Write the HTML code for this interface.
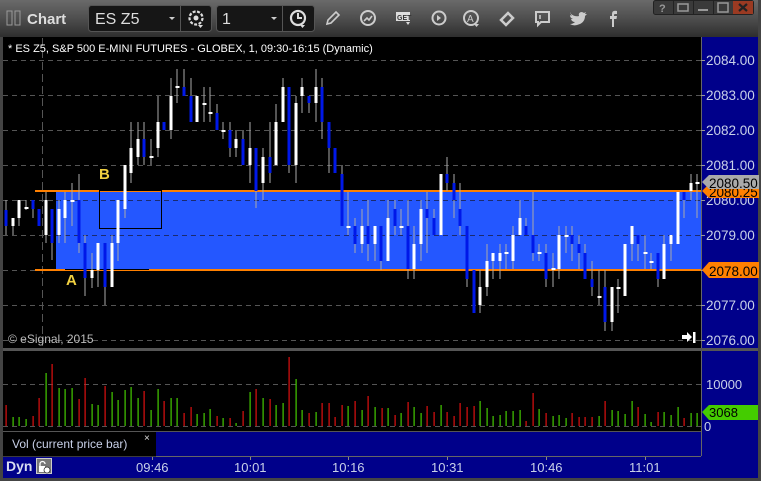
<!DOCTYPE html>
<html><head><meta charset="utf-8"><style>
body{margin:0;width:761px;height:481px;overflow:hidden;background:#3a3a3a;font-family:"Liberation Sans",sans-serif}
svg{display:block}
</style></head><body>
<svg id="s" width="761" height="481" xmlns="http://www.w3.org/2000/svg" font-family="Liberation Sans, sans-serif">
<defs><linearGradient id="tb" x1="0" y1="0" x2="0" y2="1"><stop offset="0" stop-color="#6a6a6a"/><stop offset="0.5" stop-color="#4e4e4e"/><stop offset="1" stop-color="#2e2e2e"/></linearGradient></defs>
<rect x="0" y="0" width="761" height="481" fill="#3c3c3c"/>
<rect x="0" y="0" width="761" height="37" fill="url(#tb)"/>
<rect x="7" y="11" width="5" height="14" fill="none" stroke="#999" stroke-width="1"/>
<rect x="15" y="11" width="5" height="14" fill="none" stroke="#999" stroke-width="1"/>
<text x="27" y="24" fill="#ddd" font-size="15" font-weight="bold">Chart</text>
<rect x="88.5" y="5.5" width="123" height="26" rx="3" fill="#161616" stroke="#555"/>
<line x1="180.5" y1="6" x2="180.5" y2="31" stroke="#555"/>
<text x="95" y="24" fill="#ddd" font-size="16">ES Z5</text>
<path d="M169 17 l6 0 l-3 3z" fill="#ccc"/>
<circle cx="196" cy="18" r="6.5" fill="none" stroke="#ddd" stroke-width="2.2" stroke-dasharray="3 1.5"/><circle cx="196" cy="18" r="2.5" fill="#ddd"/><path d="M198 25 l5 0 l-2.5 3z" fill="#ddd"/>
<rect x="216.5" y="5.5" width="98" height="26" rx="3" fill="#161616" stroke="#555"/>
<line x1="282.5" y1="6" x2="282.5" y2="31" stroke="#555"/>
<text x="222" y="24" fill="#ddd" font-size="16">1</text>
<path d="M271 17 l6 0 l-3 3z" fill="#ccc"/>
<circle cx="298" cy="18" r="7" fill="none" stroke="#ddd" stroke-width="2.2"/><path d="M298 13 v5 h4" stroke="#ddd" stroke-width="2" fill="none"/><path d="M300 25 l5 0 l-2.5 3z" fill="#ddd"/>
<path d="M327 24 l1-4 l8-8 l3 3 l-8 8z" fill="none" stroke="#ccc" stroke-width="1.6"/>
<circle cx="368" cy="18" r="7" fill="none" stroke="#ccc" stroke-width="2"/><path d="M364 21 l3-3 l2 2 l3-4" stroke="#ccc" stroke-width="1.6" fill="none"/>
<rect x="396" y="12" width="14" height="9" fill="#ddd"/><text x="397" y="20" font-size="7" font-weight="bold" fill="#333">GET</text><path d="M406 22 l4 0 l-2 3z" fill="#ddd"/>
<circle cx="439" cy="18" r="6.5" fill="none" stroke="#ccc" stroke-width="2"/><path d="M437 15 l4 3 l-4 3z" fill="#ccc"/>
<circle cx="471" cy="18" r="7" fill="none" stroke="#ccc" stroke-width="2"/><text x="467" y="22" font-size="10" fill="#ccc">A</text><path d="M474 24 l5 0 l-2.5 3z" fill="#ccc"/>
<path d="M501 20 l7-7 l5 5 l-7 7z" fill="none" stroke="#ccc" stroke-width="2.5"/>
<path d="M536 12 h13 v10 h-8 l-3 3 v-3 h-2z" fill="none" stroke="#ccc" stroke-width="2"/><line x1="540" y1="15" x2="540" y2="19" stroke="#ccc" stroke-width="1.5"/>
<path d="M571 14 q4 3 8 2 q-1-3 2-4 q2 0 3 1 l2-1 l-1 2 l2 0 l-2 2 q0 7-8 9 q-4 1-7-1 q3 0 5-2 q-3 0-4-3 h2 q-3-1-3-4 l2 1 q-2-2-1-4z" fill="#ccc"/>
<path d="M612 27 v-8 h-2 v-3 h2 v-2 q0-4 5-3 v3 h-2 q-1 0-1 1 v1 h3 l-.5 3 h-2.5 v8z" fill="#ccc"/>
<rect x="653.5" y="0.5" width="100" height="14" rx="2" fill="#3a3a3a" stroke="#222"/>
<line x1="673.5" y1="1" x2="673.5" y2="14" stroke="#222"/><line x1="693.5" y1="1" x2="693.5" y2="14" stroke="#222"/><line x1="713.5" y1="1" x2="713.5" y2="14" stroke="#222"/>
<rect x="733" y="1" width="20" height="13" fill="#9a3a22"/>
<text x="659" y="12" fill="#999" font-size="11" font-weight="bold">?</text>
<rect x="678" y="4" width="10" height="7" fill="none" stroke="#999" stroke-width="1.5"/>
<rect x="698" y="9" width="10" height="2" fill="#999"/>
<rect x="718" y="3" width="10" height="9" fill="none" stroke="#999" stroke-width="1.5"/>
<path d="M739 4 l8 7 M747 4 l-8 7" stroke="#222" stroke-width="2.2"/>
<rect x="3" y="37" width="698" height="311" fill="#000"/>
<rect x="701" y="37" width="57" height="441" fill="#00008a"/>
<line x1="701.5" y1="37" x2="701.5" y2="456" stroke="#666"/>
<rect x="3" y="348" width="755" height="3" fill="#555"/>
<rect x="3" y="351" width="698" height="80" fill="#000"/>
<line x1="3" y1="431.5" x2="701" y2="431.5" stroke="#555"/>
<rect x="3" y="432" width="153" height="24" fill="#000"/>
<rect x="156" y="432" width="545" height="24" fill="#00008a"/>
<line x1="156" y1="456.5" x2="701" y2="456.5" stroke="#666"/>
<rect x="3" y="457" width="755" height="21" fill="#00008a"/>
<rect x="0" y="478" width="761" height="3" fill="#444"/>
<rect x="0" y="37" width="3" height="444" fill="#444"/>
<rect x="758" y="0" width="3" height="481" fill="#444"/>
<g id="grid" stroke="#555" stroke-dasharray="5 4"></g>
<line x1="42.5" y1="38" x2="42.5" y2="346" stroke="#555" stroke-dasharray="8 4"/>
<rect x="56" y="191" width="645" height="79" fill="#2457ff"/>
<g id="zgrid" stroke="#1a2a70" stroke-dasharray="5 4"></g>
<line x1="35" y1="191" x2="701" y2="191" stroke="#ff8000" stroke-width="2"/>
<line x1="35" y1="270" x2="701" y2="270" stroke="#ff8000" stroke-width="2"/>
<rect x="99.5" y="190.5" width="62" height="38" fill="none" stroke="#000" stroke-width="1"/>
<line x1="65" y1="269.5" x2="149" y2="269.5" stroke="#000"/>
<g id="c"></g>
<text x="99" y="179" fill="#f0d040" font-size="15" font-weight="bold">B</text>
<text x="66" y="285" fill="#f0d040" font-size="15" font-weight="bold">A</text>
<text x="8" y="52" fill="#fff" font-size="11">* ES Z5, S&amp;P 500 E-MINI FUTURES - GLOBEX, 1, 09:30-16:15 (Dynamic)</text>
<text x="8" y="343" fill="#bbb" font-size="12">© eSignal, 2015</text>
<path d="M682 335 h5 v-3 l5 5 l-5 5 v-3 h-5z" fill="#fff"/><rect x="693" y="332" width="2.5" height="11" fill="#fff"/>
<g id="p" fill="#c8d0e8" font-size="13.5"></g>
<path d="M702 191 l7-7 h50 v14 h-50z" fill="#ff8000"/>
<text x="709" y="197" fill="#000" font-size="13.5">2080.25</text>
<path d="M702 182 l7-7 h50 v14 h-50z" fill="#aaa"/>
<text x="709" y="188" fill="#000" font-size="13.5">2080.50</text>
<path d="M702 270 l7-8 h50 v16 h-50z" fill="#ff8000"/>
<text x="709" y="276" fill="#000" font-size="13.5">2078.00</text>
<line x1="3" y1="384.5" x2="701" y2="384.5" stroke="#555" stroke-dasharray="5 4"/>
<line x1="3" y1="426.5" x2="701" y2="426.5" stroke="#555" stroke-dasharray="5 4"/>
<g id="v"></g>
<text x="706" y="389" fill="#c8d0e8" font-size="13">10000</text>
<text x="704" y="431" fill="#c8d0e8" font-size="13">0</text>
<path d="M702 412 l7-7 h49 v15 h-49z" fill="#44cc00"/>
<text x="709" y="417" fill="#000" font-size="13">3068</text>
<text x="12" y="448" fill="#c8d0e8" font-size="12">Vol (current price bar)</text>
<text x="144" y="441" fill="#ddd" font-size="10">×</text>
<text x="6" y="471" fill="#d8ddf0" font-size="14" font-weight="bold">Dyn</text>
<rect x="36.5" y="458.5" width="15" height="15" fill="#777" stroke="#ccc"/>
<path d="M40 467 v-3 a2.5 2.5 0 0 1 5 0" fill="none" stroke="#fff" stroke-width="1.3"/><rect x="39" y="466" width="6" height="6" fill="#fff"/><circle cx="47" cy="470" r="3" fill="#fff" stroke="#333" stroke-width=".8"/>
<g id="t" fill="#c8d0e8" font-size="13"></g>
</svg>
<script>
var NS="http://www.w3.org/2000/svg";
function el(p,n,a,t){var e=document.createElementNS(NS,n);for(var k in a)e.setAttribute(k,a[k]);if(t)e.textContent=t;document.getElementById(p).appendChild(e);}
var prices=["2084.00","2083.00","2082.00","2081.00","2080.00","2079.00","2078.00","2077.00","2076.00"];
for(var i=0;i<9;i++){var y=60+i*35;el("grid","line",{x1:3,y1:y+.5,x2:701,y2:y+.5});if(i!=6)el("p","text",{x:706,y:y+5},prices[i]);el("grid","line",{x1:701,y1:y+.5,x2:705,y2:y+.5,"stroke-dasharray":"none",stroke:"#999"});}
el("zgrid","line",{x1:56,y1:200.5,x2:701,y2:200.5});el("zgrid","line",{x1:56,y1:235.5,x2:701,y2:235.5});
var C=[[6,210,226,200,235,'b'],[13,218,226,218,235,'w'],[19,200,218,200,226,'w'],[26,208,208,200,210,'t'],[33,200,209,200,218,'b'],[39,209,226,209,226,'b'],[46,200,235,192,243,'w'],[52,209,243,209,260,'b'],[59,209,235,200,243,'w'],[65,200,218,192,243,'w'],[72,201,201,183,226,'t'],[79,200,243,174,253,'b'],[85,243,278,235,296,'b'],[92,270,278,253,288,'w'],[98,243,270,243,287,'w'],[105,243,287,243,305,'b'],[112,243,287,235,287,'w'],[118,200,243,200,261,'w'],[125,165,209,165,218,'w'],[131,148,173,122,183,'w'],[138,139,157,122,165,'w'],[144,139,157,122,165,'b'],[151,157,157,139,165,'t'],[158,122,148,96,157,'w'],[164,122,130,122,130,'b'],[171,96,130,78,139,'w'],[177,87,87,69,103,'t'],[184,87,96,69,96,'b'],[191,96,122,78,122,'b'],[197,96,122,96,122,'w'],[204,104,104,87,122,'t'],[210,113,113,87,122,'t'],[217,113,130,104,130,'b'],[223,131,131,122,139,'t'],[230,130,148,122,157,'b'],[236,139,148,130,157,'w'],[243,139,165,130,165,'b'],[250,148,165,122,183,'w'],[256,148,191,148,208,'b'],[263,157,183,148,200,'w'],[270,157,173,122,183,'b'],[276,122,165,104,165,'w'],[283,87,122,78,122,'w'],[289,87,165,87,173,'b'],[296,103,165,96,183,'w'],[302,87,96,78,113,'w'],[309,96,103,96,113,'b'],[316,87,103,69,122,'w'],[322,87,122,78,139,'b'],[329,122,148,122,173,'b'],[335,148,173,148,173,'b'],[342,174,226,165,226,'b'],[348,227,227,192,235,'t'],[355,226,244,218,253,'b'],[362,226,244,209,253,'w'],[368,226,244,200,261,'b'],[375,226,244,226,261,'w'],[381,226,261,226,270,'b'],[388,218,261,200,261,'w'],[395,209,226,200,235,'b'],[401,227,227,209,235,'t'],[408,226,269,200,279,'b'],[414,244,269,226,279,'w'],[421,209,244,200,261,'w'],[427,209,218,192,253,'b'],[434,218,235,209,235,'b'],[441,174,235,174,235,'w'],[447,174,183,157,191,'b'],[454,183,200,174,218,'b'],[460,209,226,183,235,'b'],[467,226,279,226,287,'b'],[474,270,313,270,313,'b'],[480,287,305,270,313,'w'],[487,261,287,244,296,'w'],[493,253,261,253,279,'w'],[500,253,261,244,279,'w'],[506,253,253,244,269,'t'],[513,235,261,226,269,'w'],[520,218,235,200,235,'w'],[526,226,235,218,235,'b'],[533,235,253,192,261,'b'],[539,253,253,244,261,'t'],[546,253,279,244,287,'b'],[553,269,269,253,287,'t'],[559,235,269,226,279,'w'],[566,236,236,226,253,'t'],[572,235,244,226,261,'b'],[579,244,253,235,269,'b'],[585,253,279,244,279,'b'],[592,279,287,261,296,'b'],[599,297,297,270,305,'t'],[605,287,322,270,331,'b'],[612,287,322,287,331,'w'],[618,288,288,279,313,'t'],[625,244,296,244,296,'w'],[632,226,244,226,261,'w'],[638,235,244,235,261,'b'],[645,253,253,235,269,'t'],[651,262,262,253,269,'t'],[658,253,279,253,287,'b'],[664,244,279,235,279,'w'],[671,235,244,235,261,'w'],[678,192,244,192,244,'w'],[684,192,200,192,218,'b'],[691,183,191,174,200,'w'],[697,183,183,174,218,'t']];
C.forEach(function(c){var x=c[0];if(c[4]>c[3])el("c","rect",{x:x-0.5,y:c[3],width:1,height:c[4]-c[3],fill:"#aaa"});
if(c[5]=='t')el("c","rect",{x:x-1.5,y:c[1]-1,width:4,height:2,fill:"#fff"});
else el("c","rect",{x:x-1.5,y:c[1],width:3,height:Math.max(2,c[2]-c[1]),fill:c[5]=='b'?"#0018e8":"#fff"});});
var V=[[6,405,'r'],[13,417,'g'],[19,417,'g'],[26,419,'g'],[33,416,'r'],[39,398,'r'],[46,373,'g'],[52,364,'r'],[59,388,'g'],[65,389,'g'],[72,388,'g'],[79,399,'r'],[85,378,'r'],[92,404,'g'],[98,405,'g'],[105,386,'r'],[112,392,'g'],[118,400,'g'],[125,390,'g'],[131,387,'g'],[138,398,'g'],[144,391,'r'],[151,410,'g'],[158,389,'g'],[164,401,'r'],[171,398,'g'],[177,398,'g'],[184,413,'r'],[191,407,'r'],[197,414,'g'],[204,413,'g'],[210,409,'g'],[217,416,'r'],[223,418,'g'],[230,418,'r'],[236,423,'g'],[243,411,'r'],[250,392,'g'],[256,389,'r'],[263,398,'g'],[270,399,'r'],[276,405,'g'],[283,403,'g'],[289,357,'r'],[296,379,'g'],[302,410,'g'],[309,413,'r'],[316,412,'g'],[322,403,'r'],[329,403,'r'],[335,417,'r'],[342,405,'r'],[348,406,'g'],[355,401,'r'],[362,410,'g'],[368,396,'r'],[375,407,'g'],[382,408,'r'],[388,408,'g'],[395,415,'r'],[401,413,'g'],[408,402,'r'],[414,407,'g'],[421,413,'g'],[427,406,'r'],[434,412,'r'],[441,405,'g'],[447,412,'r'],[454,416,'r'],[460,403,'r'],[467,407,'r'],[474,406,'r'],[480,401,'g'],[487,408,'g'],[493,416,'g'],[500,415,'g'],[506,411,'g'],[513,411,'g'],[520,410,'g'],[526,421,'r'],[533,393,'r'],[539,409,'g'],[546,413,'r'],[553,416,'g'],[559,415,'g'],[566,418,'g'],[572,413,'r'],[579,417,'r'],[585,417,'r'],[592,417,'r'],[599,416,'g'],[605,401,'r'],[612,410,'g'],[618,411,'g'],[625,414,'g'],[632,401,'g'],[638,407,'r'],[645,414,'g'],[651,422,'g'],[658,412,'r'],[664,412,'g'],[671,415,'g'],[678,407,'g'],[684,418,'r'],[691,413,'g'],[697,413,'g']];
V.forEach(function(v){el("v","rect",{x:v[0]-0.5,y:v[1],width:1.2,height:426-v[1],fill:v[2]=='r'?"#e01010":"#44cc00"});});
[["09:46",152],["10:01",250],["10:16",348],["10:31",447],["10:46",546],["11:01",645]].forEach(function(t){el("t","text",{x:t[1]-16,y:472},t[0]);el("t","rect",{x:t[1],y:457,width:1,height:3,fill:"#888"});});
</script>
</body></html>
